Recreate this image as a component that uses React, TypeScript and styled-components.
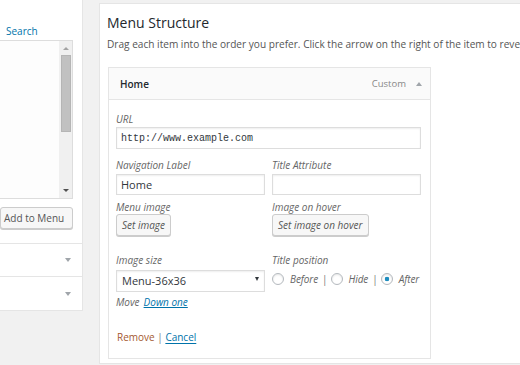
import React from 'react';
import styled, { createGlobalStyle } from 'styled-components';

const GlobalStyle = createGlobalStyle`
  html, body {
    margin: 0;
    padding: 0;
  }
  body {
    background: #f1f1f1;
    font-family: "Open Sans", "Liberation Sans", sans-serif;
    width: 520px;
    height: 365px;
    overflow: hidden;
  }
  * {
    box-sizing: border-box;
  }
`;

const Page = styled.div`
  display: flex;
  align-items: flex-start;
  width: 520px;
  height: 365px;
  overflow: hidden;
`;

/* left column : menu item picker, cut off by the crop */

const LeftColumn = styled.div`
  width: 83px;
  flex-shrink: 0;
  display: flex;
  flex-direction: column;
`;

const PickerBox = styled.div`
  height: 243px;
  background: #fff;
  border-right: 1px solid #e5e5e5;
  padding-top: 24px;
`;

const Tabs = styled.div`
  height: 14px;
  padding-left: 6px;
  font-size: 10px;
  line-height: 14px;
`;

const TabLink = styled.a`
  color: #0073aa;
  text-decoration: none;
`;

const ListBox = styled.div`
  margin-top: 2px;
  width: 73px;
  height: 159px;
  background: #fdfdfd;
  border: 1px solid #ddd;
  border-left: none;
  display: flex;
  justify-content: flex-end;
`;

const ScrollTrack = styled.div`
  width: 13px;
  height: 100%;
  background: #f0f0f0;
  display: flex;
  flex-direction: column;
  align-items: center;
  padding: 6px 0 6px;
`;

const ScrollArrow = styled.span<{ $down?: boolean }>`
  width: 0;
  height: 0;
  border-left: 3px solid transparent;
  border-right: 3px solid transparent;
  ${(p) => (p.$down ? 'border-top: 3px solid #505050;' : 'border-bottom: 3px solid #a3a3a3;')}
  ${(p) => (p.$down ? 'margin-top: auto;' : '')}
`;

const ScrollThumb = styled.div`
  margin-top: 5px;
  width: 10px;
  height: 77px;
  background: #c1c1c1;
  border: 1px solid #b5b5b5;
`;

const AddButton = styled.button`
  display: block;
  margin-top: 8px;
  width: 73px;
  height: 22px;
  padding: 0 0 0 3px;
  text-align: left;
  font-family: inherit;
  font-size: 10px;
  color: #555;
  background: #f7f7f7;
  border: 1px solid #ccc;
  border-radius: 3px;
  box-shadow: 0 1px 0 #ccc;
`;

const AccordionRow = styled.div<{ $h: number; $last?: boolean }>`
  height: ${(p) => p.$h}px;
  background: #fff;
  border-top: 1px solid #e5e5e5;
  border-right: 1px solid #e5e5e5;
  ${(p) => (p.$last ? 'border-bottom: 1px solid #e5e5e5;' : '')}
  display: flex;
  align-items: center;
  justify-content: flex-end;
  padding-right: 11px;
`;

const DownCaret = styled.span`
  width: 0;
  height: 0;
  border-left: 3.5px solid transparent;
  border-right: 3.5px solid transparent;
  border-top: 4px solid #a0a5aa;
`;

/* main panel : menu structure */

const MainPanel = styled.div`
  flex-shrink: 0;
  margin-left: 16px;
  margin-top: 3px;
  width: 440px;
  height: 361px;
  background: #fff;
  border: 1px solid #e5e5e5;
  border-right: none;
  padding: 9px 0 0 7px;
  overflow: hidden;
`;

const Heading = styled.h3`
  margin: 0;
  font-size: 14px;
  line-height: 20px;
  font-weight: 400;
  color: #23282d;
`;

const Description = styled.p`
  margin: 4px 0 0;
  font-size: 10.1px;
  line-height: 14px;
  color: #555;
  white-space: nowrap;
`;

const MenuItem = styled.div`
  margin: 16px 0 0 1px;
  width: 323px;
  border: 1px solid #e5e5e5;
`;

const ItemHeader = styled.div`
  height: 32px;
  background: #fafafa;
  border-bottom: 1px solid #e5e5e5;
  display: flex;
  align-items: center;
  padding: 0 8px 0 11px;
`;

const ItemTitle = styled.span`
  font-size: 10px;
  font-weight: 600;
  color: #23282d;
`;

const ItemType = styled.span`
  margin-left: auto;
  font-size: 9.5px;
  color: #888;
`;

const UpCaret = styled.span`
  margin-left: 10px;
  width: 0;
  height: 0;
  border-left: 3px solid transparent;
  border-right: 3px solid transparent;
  border-bottom: 4px solid #a0a5aa;
`;

const ItemBody = styled.div`
  padding: 12px 9px 14px 7px;
`;

const FieldRow = styled.div<{ $gap: number }>`
  margin-top: ${(p) => p.$gap}px;
  display: grid;
  grid-template-columns: 149px 149px;
  column-gap: 7px;
`;

const Field = styled.div<{ $inner?: number }>`
  display: flex;
  flex-direction: column;
  align-items: flex-start;
  gap: ${(p) => p.$inner ?? 1}px;
`;

const Label = styled.label`
  display: block;
  font-size: 10px;
  line-height: 14px;
  font-style: italic;
  color: #666;
`;

const TextInput = styled.input<{ $mono?: boolean; $h?: number }>`
  width: 100%;
  height: ${(p) => p.$h ?? 22}px;
  margin: 0;
  padding: 0 4px;
  border: 1px solid #ddd;
  box-shadow: inset 0 1px 2px rgba(0, 0, 0, 0.07);
  background: #fff;
  color: #32373c;
  font-family: ${(p) => (p.$mono ? '"Liberation Mono", "DejaVu Sans Mono", monospace' : 'inherit')};
  font-size: ${(p) => (p.$mono ? 10 : 11)}px;
  outline: none;
`;

const SmallButton = styled.button`
  height: 22px;
  padding: 0 5px;
  font-family: inherit;
  font-size: 10px;
  font-style: italic;
  color: #555;
  background: #f7f7f7;
  border: 1px solid #ccc;
  border-radius: 3px;
  box-shadow: 0 1px 0 #ccc;
`;

const SelectWrap = styled.div`
  position: relative;
  width: 100%;
`;

const Select = styled.select`
  width: 100%;
  height: 22px;
  margin: 0;
  padding: 0 0 0 5px;
  appearance: none;
  border: 1px solid #ddd;
  box-shadow: inset 0 1px 2px rgba(0, 0, 0, 0.07);
  background: #fff;
  color: #32373c;
  font-family: inherit;
  font-size: 11px;
  outline: none;
`;

const SelectCaret = styled.span`
  position: absolute;
  right: 6px;
  top: 9px;
  width: 0;
  height: 0;
  border-left: 2.5px solid transparent;
  border-right: 2.5px solid transparent;
  border-top: 4px solid #32373c;
  pointer-events: none;
`;

const RadioGroup = styled.div`
  height: 22px;
  display: flex;
  align-items: center;
  font-size: 10px;
  font-style: italic;
  color: #666;
  white-space: nowrap;
`;

const Radio = styled.input`
  appearance: none;
  flex-shrink: 0;
  margin: 0;
  width: 12px;
  height: 12px;
  border-radius: 50%;
  border: 1px solid #b4b9be;
  background: #fff;
  box-shadow: inset 0 1px 2px rgba(0, 0, 0, 0.1);
  &:checked {
    background: radial-gradient(circle, #1e8cbe 0 2px, #fff 2.6px);
  }
`;

const RadioText = styled.span`
  margin: 0 4px 0 6px;
  letter-spacing: -0.1px;
`;

const Sep = styled.span`
  font-style: normal;
  color: #777;
  margin-right: 3px;
`;

const MoveLine = styled.div`
  margin-top: 3px;
  font-size: 10px;
  line-height: 14px;
  font-style: italic;
  color: #666;
`;

const MoveLink = styled.a`
  margin-left: 4px;
  color: #0073aa;
  text-decoration: underline;
`;

const Actions = styled.div`
  margin-top: 21px;
  font-size: 10px;
  line-height: 14px;
  padding-left: 1px;
  color: #777;
`;

const DeleteLink = styled.a`
  color: #a4582f;
  text-decoration: none;
`;

const CancelLink = styled.a`
  color: #0073aa;
  text-decoration: underline;
  text-underline-offset: 2px;
`;

export default function App() {
  return (
    <>
      <GlobalStyle />
      <Page>
        <LeftColumn>
          <PickerBox>
            <Tabs>
              <TabLink href="#">Search</TabLink>
            </Tabs>
            <ListBox>
              <ScrollTrack>
                <ScrollArrow />
                <ScrollThumb />
                <ScrollArrow $down />
              </ScrollTrack>
            </ListBox>
            <AddButton>Add to Menu</AddButton>
          </PickerBox>
          <AccordionRow $h={33}>
            <DownCaret />
          </AccordionRow>
          <AccordionRow $h={35} $last>
            <DownCaret />
          </AccordionRow>
        </LeftColumn>

        <MainPanel>
          <Heading>Menu Structure</Heading>
          <Description>
            Drag each item into the order you prefer. Click the arrow on the right of the item to reveal additional configuration options.
          </Description>

          <MenuItem>
            <ItemHeader>
              <ItemTitle>Home</ItemTitle>
              <ItemType>Custom</ItemType>
              <UpCaret />
            </ItemHeader>
            <ItemBody>
              <Field>
                <Label>URL</Label>
                <TextInput $mono readOnly defaultValue="http://www.example.com" />
              </Field>

              <FieldRow $gap={9}>
                <Field $inner={2}>
                  <Label>Navigation Label</Label>
                  <TextInput $h={21} readOnly defaultValue="Home" />
                </Field>
                <Field $inner={2}>
                  <Label>Title Attribute</Label>
                  <TextInput $h={21} readOnly defaultValue="" />
                </Field>
              </FieldRow>

              <FieldRow $gap={5}>
                <Field $inner={0}>
                  <Label>Menu image</Label>
                  <SmallButton>Set image</SmallButton>
                </Field>
                <Field $inner={0}>
                  <Label>Image on hover</Label>
                  <SmallButton>Set image on hover</SmallButton>
                </Field>
              </FieldRow>

              <FieldRow $gap={17}>
                <Field>
                  <Label>Image size</Label>
                  <SelectWrap>
                    <Select defaultValue="menu-36x36">
                      <option value="menu-36x36">Menu-36x36</option>
                    </Select>
                    <SelectCaret />
                  </SelectWrap>
                </Field>
                <Field>
                  <Label>Title position</Label>
                  <RadioGroup>
                    <Radio type="radio" name="title-pos" />
                    <RadioText>Before</RadioText>
                    <Sep>|</Sep>
                    <Radio type="radio" name="title-pos" />
                    <RadioText>Hide</RadioText>
                    <Sep>|</Sep>
                    <Radio type="radio" name="title-pos" defaultChecked />
                    <RadioText>After</RadioText>
                  </RadioGroup>
                </Field>
              </FieldRow>

              <MoveLine>
                Move<MoveLink href="#">Down one</MoveLink>
              </MoveLine>

              <Actions>
                <DeleteLink href="#">Remove</DeleteLink> | <CancelLink href="#">Cancel</CancelLink>
              </Actions>
            </ItemBody>
          </MenuItem>
        </MainPanel>
      </Page>
    </>
  );
}
